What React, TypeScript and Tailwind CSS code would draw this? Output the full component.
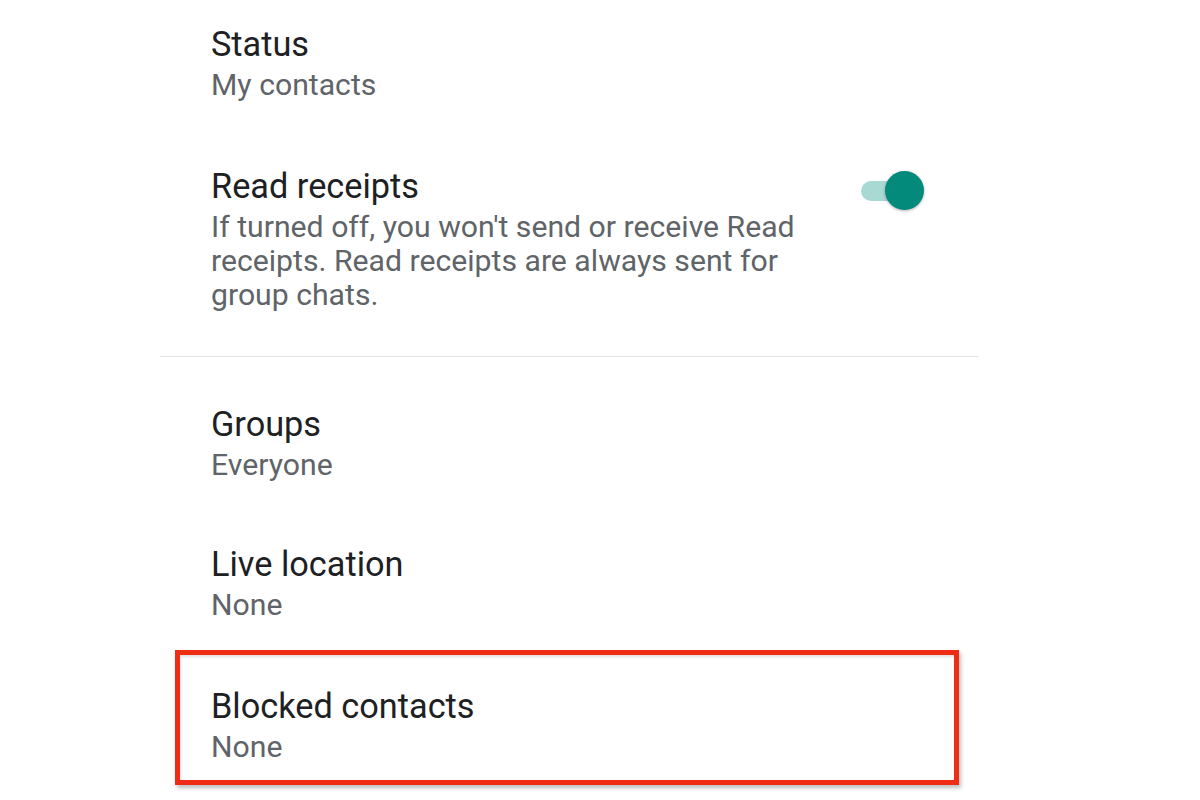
export default function App() {
  const title = "text-[34.3px] leading-[40px] text-[#1d2124] whitespace-nowrap";
  const sub = "mt-[4px] text-[30.2px] leading-[34px] text-[#5f6468] whitespace-nowrap";
  return (
    <div className="w-[1200px] h-[800px] bg-white overflow-hidden" style={{ fontFamily: "Roboto, 'Noto Sans', sans-serif" }}>
      <div className="ml-[160px] w-[818px] flex flex-col">
        <div className="pl-[51px] pt-[24px]">
          <div className={title}>Status</div>
          <div className={sub}>My contacts</div>
        </div>
        <div className="pl-[51px] pt-[64px] flex items-start justify-between">
          <div>
            <div className={title}>Read receipts</div>
            <div className={sub}>
              If turned off, you won't send or receive Read
              <br />
              receipts. Read receipts are always sent for
              <br />
              group chats.
            </div>
          </div>
          <div className="mr-[54px] mt-[5px] relative w-[64px] h-[39px] flex items-center">
            <div className="ml-[1px] w-[56px] h-[20px] rounded-full bg-[#a9d9d3]" />
            <div className="absolute right-0 top-0 w-[39px] h-[39px] rounded-full bg-[#038a7b] shadow-[0_1px_3px_rgba(0,0,0,0.3)]" />
          </div>
        </div>
        <div className="mt-[44px] h-[1px] bg-[#e2e2e2]" />
        <div className="pl-[51px] pt-[47px]">
          <div className={title}>Groups</div>
          <div className={sub}>Everyone</div>
        </div>
        <div className="pl-[51px] pt-[62px]">
          <div className={title}>Live location</div>
          <div className={sub}>None</div>
        </div>
        <div className="ml-[15px] mt-[28px] w-[784px] h-[135px] border-[5px] border-[#ef2d14] pl-[31px] pt-[31px] shadow-[2px_3px_4px_rgba(0,0,0,0.25),inset_1px_2px_3px_rgba(0,0,0,0.12)]">
          <div className={title}>Blocked contacts</div>
          <div className={sub}>None</div>
        </div>
      </div>
    </div>
  );
}
